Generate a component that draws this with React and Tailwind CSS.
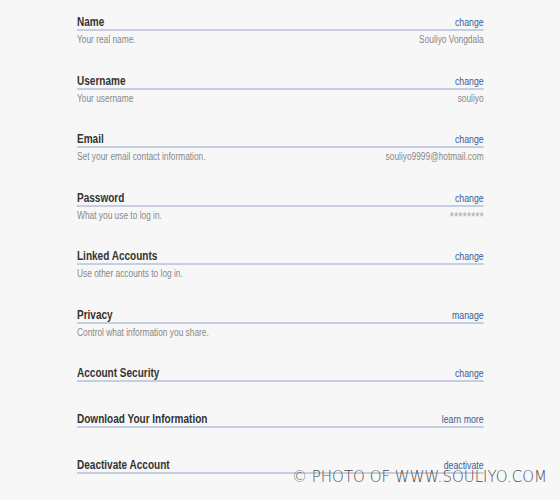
import React from "react";

const sections = [
  { title: "Name", action: "change", note: "Your real name.", value: "Souliyo Vongdala" },
  { title: "Username", action: "change", note: "Your username", value: "souliyo" },
  { title: "Email", action: "change", note: "Set your email contact information.", value: "souliyo9999@hotmail.com" },
  { title: "Password", action: "change", note: "What you use to log in.", value: "********" },
  { title: "Linked Accounts", action: "change", note: "Use other accounts to log in." },
  { title: "Privacy", action: "manage", note: "Control what information you share." },
  { title: "Account Security", action: "change" },
  { title: "Download Your Information", action: "learn more" },
  { title: "Deactivate Account", action: "deactivate" },
];

function Section({ title, action, note, value }) {
  return (
    <div className={note ? "pb-[27.5px]" : "pb-[30px]"}>
      <div className="flex items-baseline justify-between border-b-2 border-[#c6cfe2]">
        <h3 className="text-[12px] font-bold leading-[14px] text-[#333]">{title}</h3>
        <a href="#" className="text-[10.5px] leading-[14px] text-[#3b5998]">{action}</a>
      </div>
      {note && (
        <div className="mt-[3px] flex h-[12px] items-start justify-between text-[10px] leading-[12px] text-[#888]">
          <span>{note}</span>
          {value && (
            <span className={value.startsWith("*") ? "text-[13px] leading-[13px] text-[#aaa]" : ""}>{value}</span>
          )}
        </div>
      )}
    </div>
  );
}

export default function App() {
  return (
    <div
      className="relative h-[500px] w-[560px] overflow-hidden bg-[#f7f7f7]"
      style={{ fontFamily: '"Liberation Sans", Arial, sans-serif' }}
    >
      {/* the settings list is squeezed sideways like the original capture */}
      <div className="ml-[77px] w-[487px] origin-left scale-x-[0.835] pt-[15px]">
        {sections.map((s) => (
          <Section key={s.title} {...s} />
        ))}
      </div>
      <div
        className="absolute left-[292px] top-[468px] text-[15px] font-extralight leading-[18px] text-[#4d4d4d]"
        style={{ fontFamily: '"DejaVu Sans", sans-serif' }}
      >
        © PHOTO OF WWW.SOULIYO.COM
      </div>
    </div>
  );
}
